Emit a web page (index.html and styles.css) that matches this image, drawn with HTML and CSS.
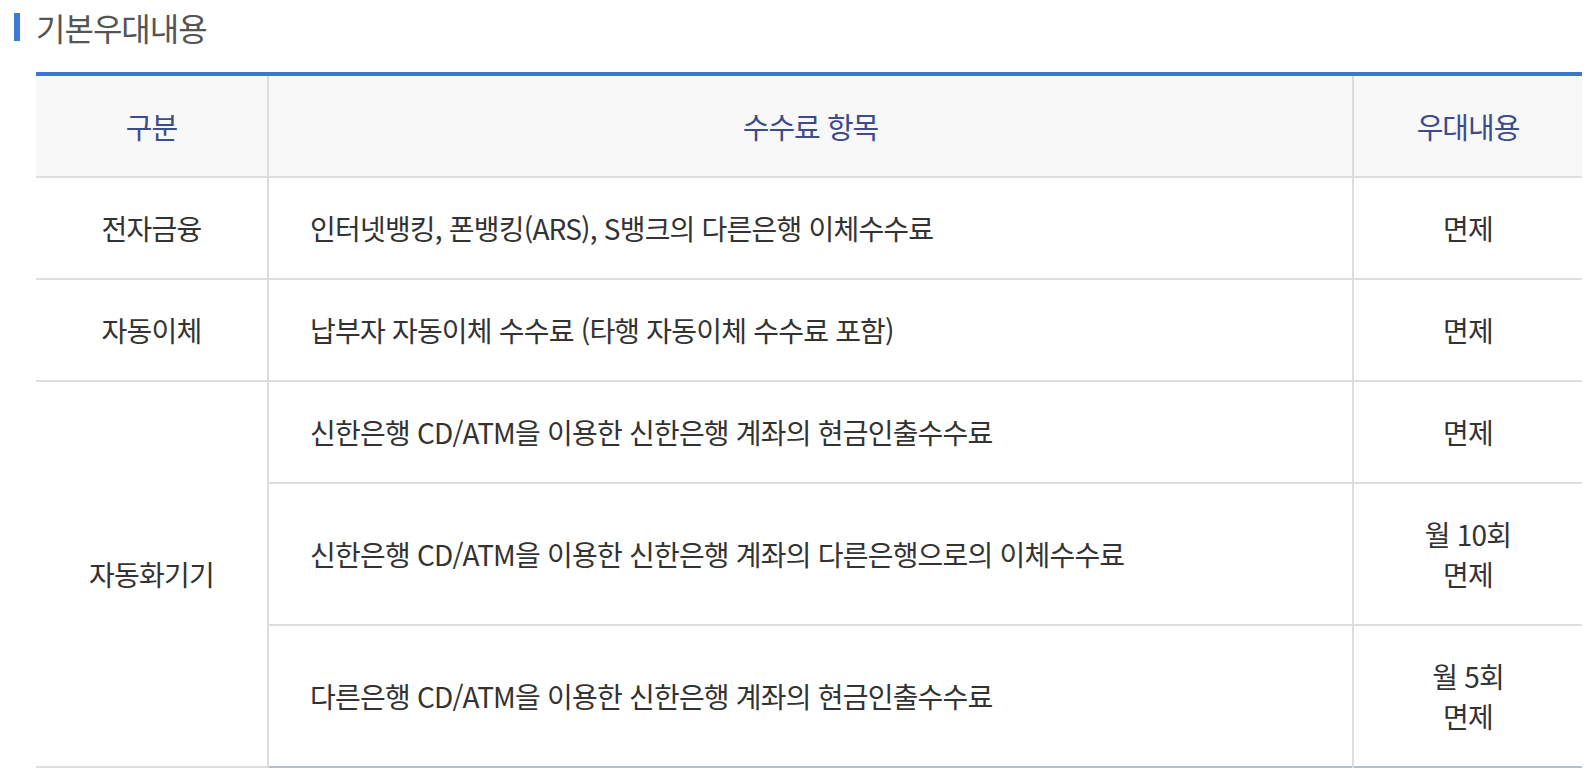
FILE: index.html
```html
<!DOCTYPE html>
<html lang="ko">
<head>
<meta charset="utf-8">
<title>기본우대내용</title>
<link rel="stylesheet" href="styles.css">
</head>
<body>
<div class="page">
  <h2 class="title">기본우대내용</h2>
  <table class="benefit">
    <colgroup>
      <col class="c1">
      <col class="c2">
      <col class="c3">
    </colgroup>
    <thead>
      <tr>
        <th>구분</th>
        <th>수수료 항목</th>
        <th>우대내용</th>
      </tr>
    </thead>
    <tbody>
      <tr>
        <td class="cat">전자금융</td>
        <td class="item">인터넷뱅킹, 폰뱅킹(ARS), S뱅크의 다른은행 이체수수료</td>
        <td class="val">면제</td>
      </tr>
      <tr>
        <td class="cat">자동이체</td>
        <td class="item">납부자 자동이체 수수료 (타행 자동이체 수수료 포함)</td>
        <td class="val">면제</td>
      </tr>
      <tr>
        <td class="cat" rowspan="3">자동화기기</td>
        <td class="item">신한은행 CD/ATM을 이용한 신한은행 계좌의 현금인출수수료</td>
        <td class="val">면제</td>
      </tr>
      <tr>
        <td class="item">신한은행 CD/ATM을 이용한 신한은행 계좌의 다른은행으로의 이체수수료</td>
        <td class="val">월 10회<br>면제</td>
      </tr>
      <tr>
        <td class="item">다른은행 CD/ATM을 이용한 신한은행 계좌의 현금인출수수료</td>
        <td class="val">월 5회<br>면제</td>
      </tr>
    </tbody>
  </table>
</div>
</body>
</html>
```

FILE: styles.css
```css
html, body {
  margin: 0;
  padding: 0;
  background: #ffffff;
}

body {
  font-family: "Noto Sans CJK KR", "Noto Sans", sans-serif;
  color: #333333;
}

.page {
  padding: 10px 10px 0 14px;
}

.title {
  display: flex;
  align-items: center;
  gap: 16px;
  margin: 0;
  height: 34px;
  font-size: 32px;
  line-height: 34px;
  font-weight: 400;
  color: #555555;
  letter-spacing: -1px;
}

.title::before {
  content: "";
  flex: none;
  width: 6px;
  height: 28px;
  background: #3b7bd3;
}

.benefit {
  margin: 28px 0 0 22px;
  width: 1546px;
  border-collapse: collapse;
  table-layout: fixed;
  border-top: 4px solid #3a78cf;
  border-bottom: 2px solid #b9bdd2;
  font-size: 28px;
  line-height: 40px;
  letter-spacing: -0.8px;
}

.c1 { width: 232px; }
.c3 { width: 229px; }

.benefit th {
  background: #f8f8f8;
  color: #3d4b8c;
  font-size: 29px;
  font-weight: 400;
  letter-spacing: -1px;
  padding: 30px 0;
  border-left: 2px solid #dddddd;
  border-bottom: 2px solid #dddddd;
  text-align: center;
}

.benefit td {
  padding: 30px 0;
  border-left: 2px solid #dddddd;
  border-bottom: 2px solid #dddddd;
  text-align: center;
  color: #333333;
}

.benefit th:first-child,
.benefit td.cat {
  border-left: none;
}

.benefit tbody tr:last-child td {
  border-bottom: none;
}

.benefit td.item {
  text-align: left;
  padding-left: 41px;
}
```
